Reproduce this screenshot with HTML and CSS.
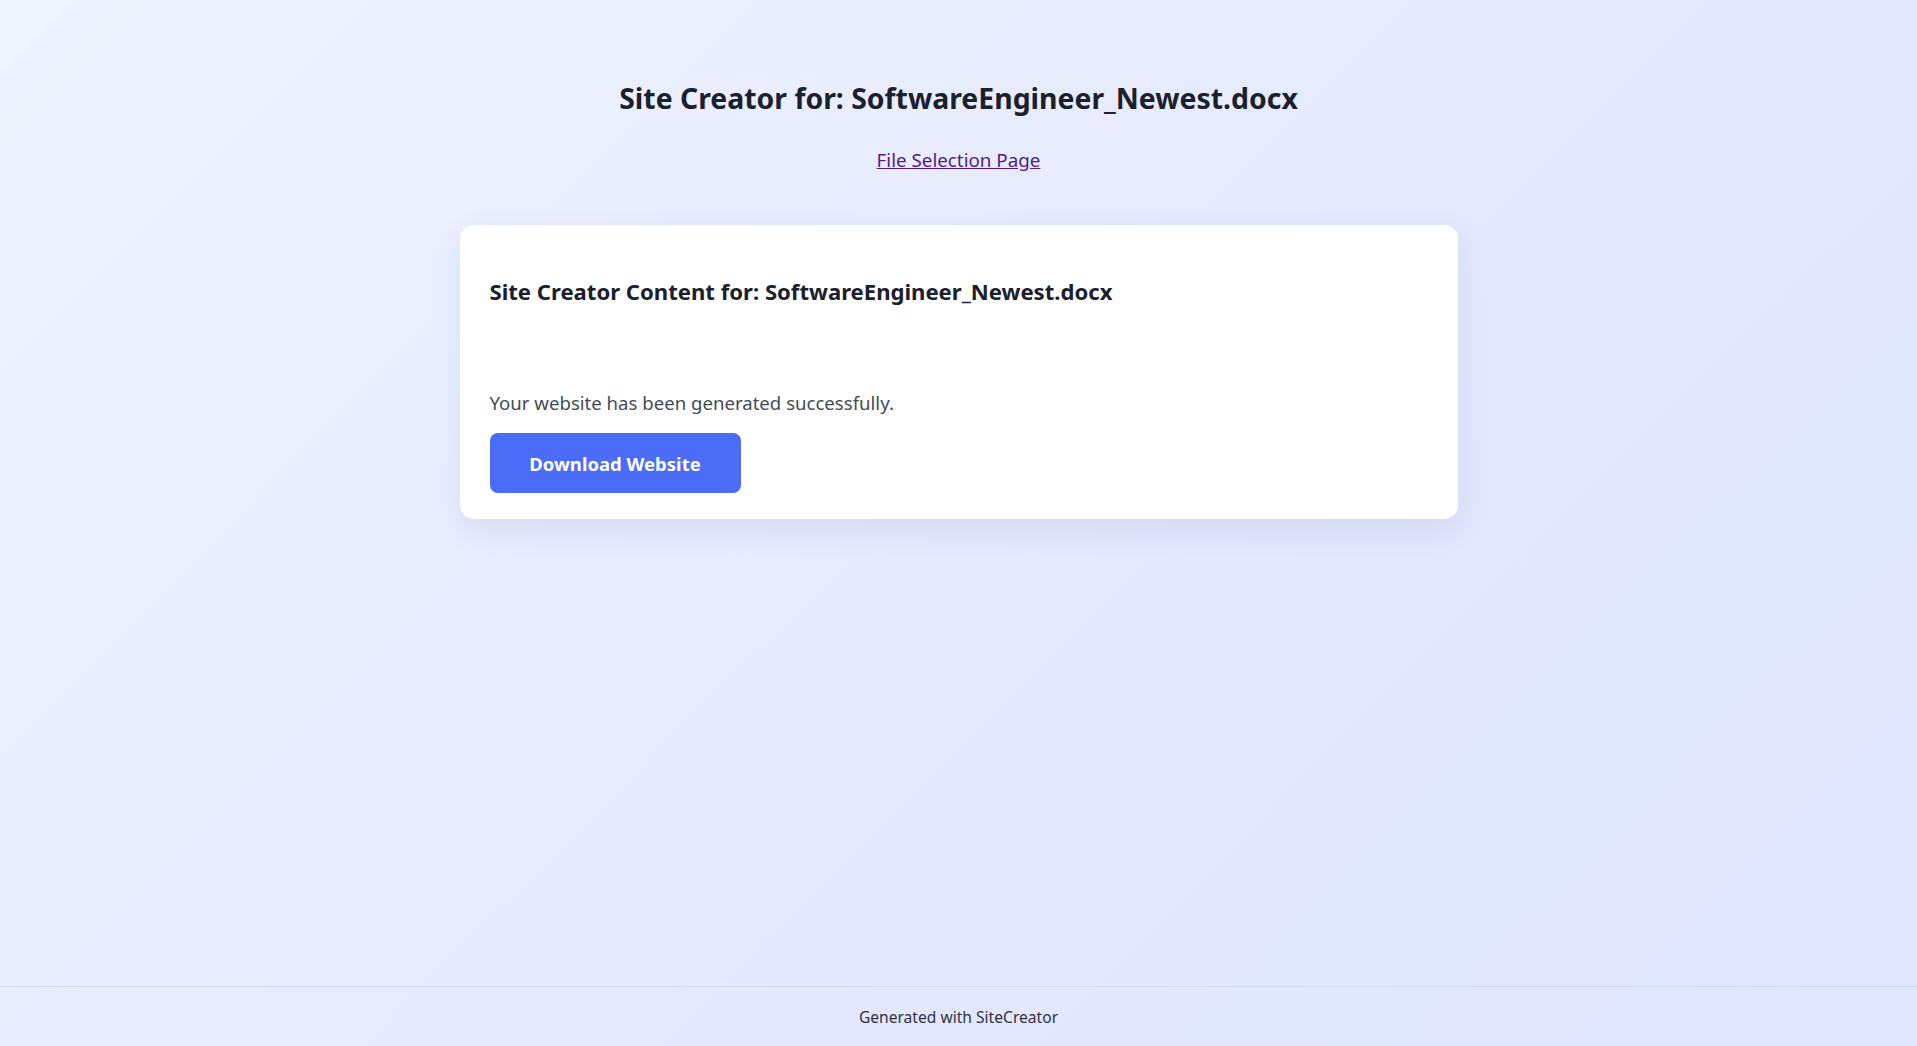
FILE: index.html
```html
<!DOCTYPE html>
<html lang="en">
<head>
<meta charset="utf-8">
<title>Site Creator</title>
<link rel="stylesheet" href="styles.css">
</head>
<body>
<main class="page">
  <h1 class="page-title">Site Creator for: SoftwareEngineer_Newest.docx</h1>
  <a class="back-link" href="#">File Selection Page</a>
  <section class="card">
    <h2 class="card-title">Site Creator Content for: SoftwareEngineer_Newest.docx</h2>
    <div class="card-spacer"></div>
    <p class="status">Your website has been generated successfully.</p>
    <button class="download-btn" type="button">Download Website</button>
  </section>
</main>
<footer class="site-footer">Generated with SiteCreator</footer>
</body>
</html>
```
FILE: styles.css
```css
html, body {
  margin: 0;
  padding: 0;
  height: 100%;
}
body {
  font-family: "Noto Sans", "Open Sans", sans-serif;
  background: linear-gradient(135deg, #f0f4ff 0%, #e3e8fd 60%, #e0e6fe 100%);
  color: #1a202c;
  display: flex;
  flex-direction: column;
  min-height: 100vh;
}
.page {
  flex: 1;
  display: flex;
  flex-direction: column;
  align-items: center;
  padding-top: 80px;
}
.page-title {
  margin: 0;
  font-size: 28.4px;
  line-height: 36px;
  font-weight: 700;
  color: #1a202c;
}
.back-link {
  margin-top: 32px;
  font-size: 18.8px;
  line-height: 24px;
  color: #551a8b;
  text-decoration: underline;
}
.card {
  margin-top: 53px;
  width: 998px;
  box-sizing: border-box;
  background: #ffffff;
  border-radius: 14px;
  padding: 24px 30px 26px;
  box-shadow: 0 10px 30px rgba(60, 70, 140, 0.10);
}
.card-title {
  margin: 28px 0 0;
  font-size: 22.1px;
  line-height: 28px;
  font-weight: 700;
  color: #1a202c;
}
.card-spacer {
  height: 85px;
}
.status {
  margin: 0;
  font-size: 18.6px;
  line-height: 26px;
  color: #444b55;
}
.download-btn {
  margin-top: 17px;
  width: 251px;
  height: 60px;
  border: none;
  border-radius: 8px;
  background: #4a6cf7;
  color: #ffffff;
  font-family: inherit;
  font-size: 18.5px;
  font-weight: 700;
  cursor: pointer;
}
.site-footer {
  height: 58px;
  padding-top: 1px;
  border-top: 1px solid #d6dcef;
  display: flex;
  align-items: center;
  justify-content: center;
  font-size: 15.6px;
  color: #2d3340;
}
```
